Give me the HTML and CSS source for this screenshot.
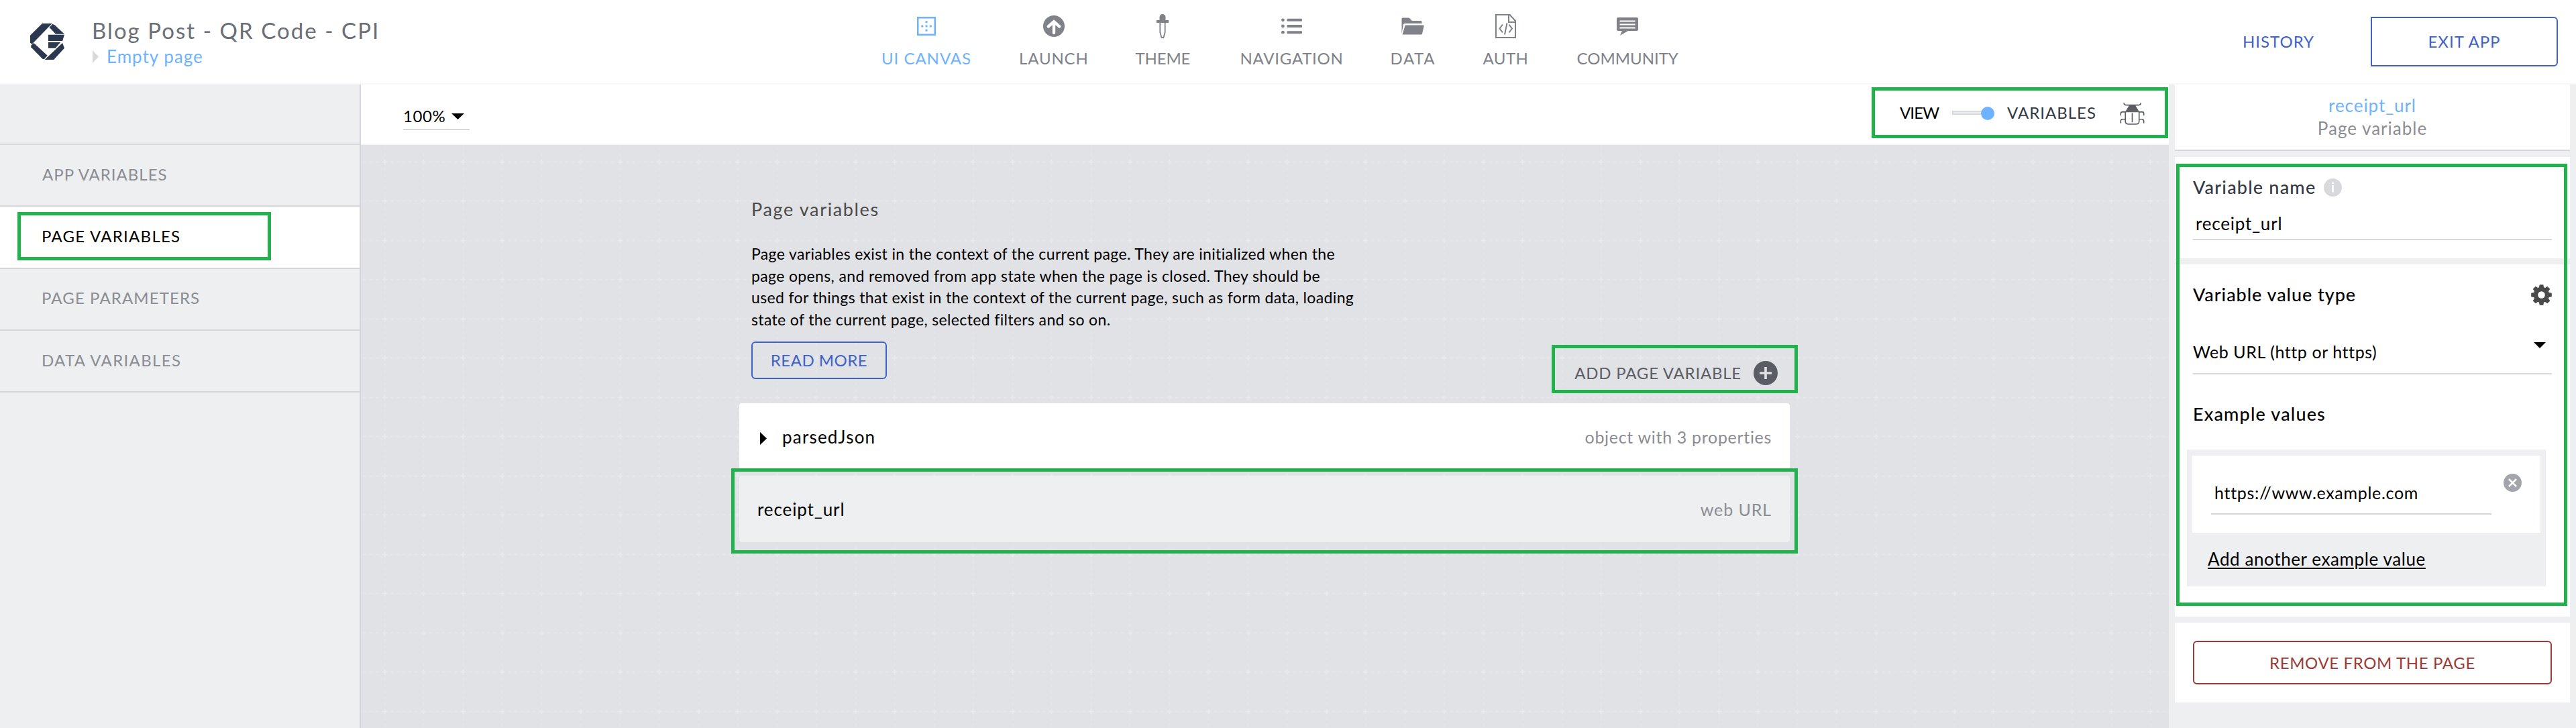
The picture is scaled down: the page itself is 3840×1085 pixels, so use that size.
FILE: index.html
```html
<!DOCTYPE html>
<html lang="en">
<head>
<meta charset="utf-8">
<title>Blog Post - QR Code - CPI</title>
<link rel="stylesheet" href="styles.css">
</head>
<body>
<header class="topbar">
  <svg class="logo" viewBox="110 105 125 162" preserveAspectRatio="none" fill="#2b3850">
    <path d="M154 105H190L116 198L110 190V158Z"/>
    <path d="M192 107L201 113L235 152H203L180 122Z"/>
    <path d="M176 155H235L228 183H176Z"/>
    <path d="M176 189H221L202 215H176Z"/>
    <path d="M228 192L235 215L196 267H163Z"/>
    <path d="M123 192L173 248L161 265L155 263L113 211V203Z"/>
  </svg>
  <div class="title">
    <h1>Blog Post - QR Code - CPI</h1>
    <div class="crumb"><svg width="9" height="19" viewBox="0 0 9 19"><path d="M0 0L9 9.5L0 19Z" fill="#d8d9dd"/></svg><a>Empty page</a></div>
  </div>
  <nav class="tabs">
    <a class="tab active t-canvas">
      <svg width="28" height="28" viewBox="0 0 28 28"><rect x="1.25" y="1.25" width="25.5" height="25.5" fill="none" stroke="#6eb3ff" stroke-width="2.5"/><path d="M12.5 6.300h3v3h-3zM12.500 12.500h3v3h-3zM12.500 18.700h3v3h-3zM6.300 12.500h3v3h-3zM18.700 12.500h3v3h-3z" fill="#6eb3ff"/></svg>
      <span>UI CANVAS</span></a>
    <a class="tab t-launch">
      <svg width="32" height="32" viewBox="0 0 32 32"><circle cx="16" cy="16" r="16" fill="#808289"/><path d="M16 26V10M7.800 16.500L16 9.200L24.200 16.500" fill="none" stroke="#fff" stroke-width="4.400" stroke-linecap="round" stroke-linejoin="miter"/></svg>
      <span>LAUNCH</span></a>
    <a class="tab t-theme">
      <svg width="18" height="36" viewBox="0 0 18 36"><path d="M4.500 9V4.500a4.500 4.500 0 0 1 9 0V9H18v4H0V9Z" fill="#808289"/><path d="M5.300 13V27L7.600 35H10.400L12.700 27V13" fill="none" stroke="#808289" stroke-width="1.800"/></svg>
      <span>THEME</span></a>
    <a class="tab t-navigation">
      <svg width="31" height="24" viewBox="0 0 31 24" fill="#808289"><circle cx="2.400" cy="2.800" r="2.400"/><circle cx="2.400" cy="12" r="2.400"/><circle cx="2.400" cy="21.200" r="2.400"/><rect x="8.500" y=".8" width="22.500" height="4" rx="1.200"/><rect x="8.500" y="10" width="22.500" height="4" rx="1.200"/><rect x="8.500" y="19.200" width="22.500" height="4" rx="1.200"/></svg>
      <span>NAVIGATION</span></a>
    <a class="tab t-data">
      <svg width="34" height="26" viewBox="0 0 34 26" fill="#808289"><path d="M.5 24V2Q.5.500 2 .5H10.500Q12 .5 13 2L16 5H29Q30.500 5 30.500 6.500V9H5Q3.500 9 3 10.500Z"/><path d="M5.700 11.500H32.500Q34 11.500 33.600 13L31 24.500Q30.700 25.500 29.500 25.500H1.500Z"/></svg>
      <span>DATA</span></a>
    <a class="tab t-auth">
      <svg width="31" height="36" viewBox="0 0 31 36" fill="none" stroke="#808289" stroke-width="2"><path d="M1 1H21.500L30 10V35H1ZM20 1V12H30"/><path d="M11 15.500L6.500 21.500L11 27.500M20.500 15.500L25 21.500L20.500 27.500M17.500 13.500L14 30.500"/></svg>
      <span>AUTH</span></a>
    <a class="tab t-community">
      <svg width="32" height="27" viewBox="0 0 32 27"><path d="M2 0H30Q32 0 32 2V18Q32 20 30 20H17L5 27L8 20H2Q0 20 0 18V2Q0 0 2 0Z" fill="#808289"/><path d="M4.500 5.500H27.500M4.500 10.500H27.500M4.500 15.500H27.500" stroke="#fff" stroke-width="2.200"/></svg>
      <span>COMMUNITY</span></a>
  </nav>
  <a class="history">HISTORY</a>
  <button class="exit">EXIT APP</button>
</header>

<div class="workspace">
  <aside class="sidebar">
    <div class="side-head"></div>
    <a class="side-item s-app">APP VARIABLES</a>
    <a class="side-item selected s-page">PAGE VARIABLES</a>
    <a class="side-item s-param">PAGE PARAMETERS</a>
    <a class="side-item s-data">DATA VARIABLES</a>
  </aside>

  <main class="main">
    <div class="toolbar">
      <div class="zoom-select"><span>100%</span><svg width="19" height="9" viewBox="0 0 19 9"><path d="M0 0H19L9.500 9Z"/></svg></div>
      <div class="mode">
        <span class="mode-view">VIEW</span>
        <span class="toggle"><i class="track"></i><i class="knob"></i></span>
        <span class="mode-vars">VARIABLES</span>
        <svg class="bug" width="37" height="33" viewBox="62 38 110 100" fill="none" stroke="#5b5d65" stroke-width="5">
          <path d="M79 39Q80 49 91 49H144Q155 49 156 39"/>
          <path d="M103 50H131L147 77H87Z" fill="#5b5d65" stroke="none"/>
          <path d="M86 79H148V122Q148 135 134 135H100Q86 135 86 122ZM117 84V127"/>
          <path d="M86 80H72Q65 80 65 87V96M148 80H162Q169 80 169 87V96M86 113H74Q65 113 65 121V131M148 113H160Q169 113 169 121V131"/>
        </svg>
      </div>
    </div>
    <div class="canvas">
      <section class="content">
        <div class="intro">
          <h2>Page variables</h2>
          <p>Page variables exist in the context of the current page. They are initialized when the<br>page opens, and removed from app state when the page is closed. They should be<br>used for things that exist in the context of the current page, such as form data, loading<br>state of the current page, selected filters and so on.</p>
          <div class="actions">
            <button class="read-more">READ MORE</button>
            <a class="add"><span>ADD PAGE VARIABLE</span><svg width="36" height="36" viewBox="0 0 36 36"><circle cx="18" cy="18" r="18" fill="#5b5d65"/><path d="M18 9V27M9 18H27" stroke="#e1e2e6" stroke-width="3.600"/></svg></a>
          </div>
        </div>
        <div class="row">
          <svg width="10" height="19" viewBox="0 0 10 19"><path d="M0 0L10 9.500L0 19Z"/></svg>
          <span class="name parsed">parsedJson</span><span class="kind object">object with 3 properties</span>
        </div>
        <div class="row current">
          <span class="name">receipt_url</span><span class="kind weburl">web URL</span>
        </div>
      </section>
    </div>
  </main>

  <aside class="panel">
    <div class="card head">
      <div class="head-name">receipt_url</div>
      <div class="head-kind">Page variable</div>
    </div>
    <div class="card name-card">
      <div class="label name-label"><span>Variable name</span><svg width="27" height="27" viewBox="0 0 27 27"><circle cx="13.500" cy="13.500" r="13.500" fill="#d8d9dd"/><path d="M12.200 5.500h2.600v2.600h-2.600zM12.200 10h2.600v10.500h-2.600z" fill="#fff"/></svg></div>
      <div class="input">receipt_url</div>
    </div>
    <div class="card type-card">
      <div class="label type-label"><span>Variable value type</span>
        <svg width="31" height="31" viewBox="-15.500 -15.500 31 31" fill="#4a4a4a"><path id="tooth" d="M-2.800 -15.300H2.800L4 -9H-4Z"/><use href="#tooth" transform="rotate(45)"/><use href="#tooth" transform="rotate(90)"/><use href="#tooth" transform="rotate(135)"/><use href="#tooth" transform="rotate(180)"/><use href="#tooth" transform="rotate(225)"/><use href="#tooth" transform="rotate(270)"/><use href="#tooth" transform="rotate(315)"/><circle r="8.500" fill="none" stroke="#4a4a4a" stroke-width="6.400"/></svg>
      </div>
      <div class="select"><span>Web URL (http or https)</span><svg width="18" height="9" viewBox="0 0 18 9"><path d="M0 0H18L9 9Z"/></svg></div>
      <div class="label example-label">Example values</div>
      <div class="examples">
        <div class="example">
          <div class="example-value">https://www.example.com</div>
          <svg width="27" height="27" viewBox="0 0 27 27"><circle cx="13.500" cy="13.500" r="13.500" fill="#a3a5aa"/><path d="M8 8L19 19M19 8L8 19" stroke="#fff" stroke-width="2.600"/></svg>
        </div>
        <a class="add-example">Add another example value</a>
      </div>
    </div>
    <div class="card remove-card"><button class="remove">REMOVE FROM THE PAGE</button></div>
  </aside>
</div>

<i class="mark mark-side"></i>
<i class="mark mark-mode"></i>
<i class="mark mark-add"></i>
<i class="mark mark-row"></i>
<i class="mark mark-panel"></i>
</body>
</html>
```
FILE: styles.css
```css
* { box-sizing: border-box; }
body {
  margin: 0;
  position: relative;
  height: 1085px;
  overflow: hidden;
  font: 24px/30px Lato, "Liberation Sans", sans-serif;
  color: #000;
  background: #fff;
  white-space: nowrap;
}
h1, h2, p { margin: 0; font-weight: 400; }
svg { display: block; flex: none; }
button { font: inherit; background: none; padding: 0; margin: 0; }

/* Top bar */
.topbar {
  height: 126px;
  border-bottom: 2px solid #f6f7f8;
  display: flex;
  align-items: flex-start;
}
.logo { width: 51px; height: 54px; margin: 35px 0 0 45px; }
.title { margin: 25px 0 0 41px; width: 1177px; }
h1 { font-size: 33px; line-height: 40px; letter-spacing: 2.05px; color: #6b6e76; }
.crumb {
  display: flex;
  align-items: center;
  gap: 12px;
  margin-top: 4px;
  padding-left: 1px;
  font-size: 26px;
  letter-spacing: 1px;
  color: #6eb3ff;
}
.tabs { display: flex; color: #808289; }
.tab {
  display: grid;
  grid-template-rows: 40px 30px;
  row-gap: 13px;
  padding-top: 19px;
  margin-right: 74px;
  place-items: center;
}
.tab.active { color: #6eb3ff; }
.t-canvas { width: 131px; letter-spacing: .96px; }
.t-launch { width: 99.500px; letter-spacing: .86px; }
.t-theme { width: 81px; letter-spacing: -.16px; margin-right: 75px; }
.t-navigation { width: 150px; letter-spacing: .75px; }
.t-data { width: 65px; letter-spacing: 1.6px; margin-right: 73px; }
.t-auth { width: 66px; letter-spacing: .44px; }
.t-community { width: 151px; margin-right: 0; }
.history { margin: 47px 0 0 auto; color: #3f62c9; letter-spacing: 1px; }
.exit {
  width: 279px;
  height: 74px;
  margin: 25px 27px 0 84px;
  border: 2px solid #3f62c9;
  border-radius: 0 6px 6px 0;
  color: #3f62c9;
  letter-spacing: 1px;
}

.workspace { display: grid; grid-template-columns: 538px 2695px 607px; height: 959px; }

/* Left sidebar */
.sidebar { background: #edeff1; border-right: 2px solid #d6d6dc; }
.side-head { height: 90px; border-bottom: 2px solid #d6d6dc; }
.side-item {
  display: block;
  height: 92px;
  padding: 29px 0 0 62px;
  border-bottom: 2px solid #d6d6dc;
  color: #8b8d93;
}
.side-item.selected { height: 93px; background: #fff; color: #000; }
.s-app { letter-spacing: .99px; padding-left: 63px; }
.s-page { letter-spacing: 1.27px; }
.s-param { letter-spacing: 1.11px; padding-top: 28px; }
.s-data { letter-spacing: 1.34px; }

/* Toolbar */
.toolbar {
  height: 90px;
  border-bottom: 2px solid #f6f7f8;
  padding: 32px 36px 0 63px;
  display: flex;
  justify-content: space-between;
  align-items: flex-start;
}
.zoom-select {
  display: flex;
  width: 99px;
  height: 36px;
  border-bottom: 2px solid #d6d6dc;
}
.zoom-select span { width: 72px; letter-spacing: .6px; }
.zoom-select svg { margin-top: 11px; }
.mode { display: flex; height: 30px; }
.mode-view { width: 78px; letter-spacing: -.9px; margin-top: -5px; }
.toggle { position: relative; width: 63px; margin-right: 19px; }
.track {
  display: block;
  width: 50px;
  height: 6px;
  margin-top: 7px;
  border: 2px solid #d8d9dd;
  background: #eeeff1;
}
.knob {
  position: absolute;
  right: 0;
  top: 1px;
  width: 20px;
  height: 20px;
  border-radius: 50%;
  background: #6eb3ff;
}
.mode-vars { width: 168px; letter-spacing: 1px; color: #333845; margin-top: -5px; }
.bug { margin-top: -5px; }

/* Canvas */
.canvas {
  height: 869px;
  padding: 81px 0 0 564px;
  background: #e1e2e6 url("data:image/svg+xml,%3Csvg xmlns='http://www.w3.org/2000/svg' width='58.5' height='58.5' viewBox='0 0 58.5 58.5'%3E%3Cg fill='%23e8e9ec'%3E%3Cpath d='M25.500 28.300h7.500v2h-7.500zM28.300 25.500h2v7.500h-2z'/%3E%3Cpath d='M37.800 28.300h4.500v2h-4.500zM47 28.300h4.500v2h-4.500zM56.200 28.300h2.300v2h-2.300zM0 28.300h2.300v2h-2.300zM7 28.300h4.500v2h-4.500zM16.200 28.300h4.500v2h-4.500z' opacity='.7'/%3E%3Cpath d='M28.300 37.800v4.500h2v-4.500zM28.300 47v4.500h2v-4.500zM28.300 56.200v2.300h2v-2.300zM28.300 0v2.300h2v-2.300zM28.300 7v4.500h2v-4.500zM28.300 16.200v4.500h2v-4.500z' opacity='.35'/%3E%3C/g%3E%3C/svg%3E") 6px -4px / 58.5px 58.5px;
}
.content { width: 1566px; }
.intro { padding-left: 18px; height: 304px; }
h2 { font-size: 27px; letter-spacing: 1.65px; color: #4a4a4a; }
.intro p {
  margin-top: 35px;
  font-size: 23px;
  line-height: 32.5px;
  letter-spacing: .36px;
}
.actions { display: flex; justify-content: space-between; align-items: flex-start; margin-top: 17px; }
.read-more {
  width: 202px;
  height: 56px;
  border: 2px solid #3f62c9;
  border-radius: 6px;
  color: #3f62c9;
  letter-spacing: .5px;
}
.add {
  display: flex;
  align-items: center;
  gap: 18px;
  margin: 29px 18px 0 0;
  color: #5b5d65;
  letter-spacing: .78px;
}
.row {
  display: flex;
  align-items: center;
  height: 99px;
  padding: 0 27px 0 31px;
  margin-bottom: 9px;
  border-radius: 4px;
  background: #fff;
}
.row.current { background: #edeff1; padding-left: 27px; }
.row .name { font-size: 26px; letter-spacing: .9px; margin-top: 1px; }
.row .parsed { letter-spacing: 1.2px; padding-left: 23px; }
.row svg { margin-top: 6px; }
.kind { margin: 1px 0 0 auto; font-size: 25px; color: #8b8d93; }
.object { letter-spacing: .68px; }
.weburl { letter-spacing: .9px; }

/* Properties panel */
.panel { background: #edeff1; padding: 0 9px; }
.card { background: #fff; margin-bottom: 9px; }
.head { height: 99px; border-bottom: 2px solid #d6d6dc; padding-top: 16px; text-align: center; }
.head-name { font-size: 26px; letter-spacing: .93px; color: #6eb3ff; }
.head-kind { font-size: 26px; letter-spacing: 1px; color: #8b8d93; margin-top: 4px; }
.label { font-size: 27px; font-weight: 500; display: flex; }
.name-card { height: 151px; padding: 30px 27px 0; }
.name-label { color: #333845; letter-spacing: 1.2px; }
.name-label svg { margin: 2px 0 0 12px; }
.input {
  height: 39px;
  margin-top: 25px;
  padding-left: 4px;
  border-bottom: 2px solid #d6d6dc;
  font-size: 26px;
  line-height: 28px;
  letter-spacing: .8px;
}
.type-card { height: 525px; padding: 30px 27px 0; }
.type-label { height: 31px; justify-content: space-between; letter-spacing: .95px; }
.select {
  height: 49px;
  margin-top: 54px;
  display: flex;
  justify-content: space-between;
  border-bottom: 2px solid #d6d6dc;
  font-size: 25px;
  letter-spacing: .57px;
}
.select svg { margin: 1px 9px 0 0; }
.example-label { margin-top: 44px; letter-spacing: 1.15px; }
.examples {
  width: 535px;
  height: 204px;
  margin: 38px 0 0 -9px;
  padding: 9px 8px 0;
  background: #edeff1;
}
.example { display: flex; height: 115px; padding-left: 28px; background: #fff; }
.example-value {
  width: 418px;
  height: 48px;
  margin: 40px 18px 0 0;
  padding-left: 5px;
  border-bottom: 2px solid #d6d6dc;
  font-size: 25px;
  letter-spacing: .7px;
}
.example svg { margin-top: 27px; }
.add-example {
  display: block;
  margin: 24px 0 0 23px;
  font-size: 26px;
  letter-spacing: .6px;
  text-decoration: underline;
  text-decoration-thickness: 2px;
  text-underline-offset: 3px;
}
.remove-card { height: 119px; padding: 27px 27px 0; }
.remove {
  width: 535px;
  height: 65px;
  border: 2px solid #9c3b36;
  border-radius: 6px;
  color: #9c3b36;
  letter-spacing: .62px;
}

/* Callout frames drawn over the interface */
.mark { position: absolute; border: 5px solid #22b14c; }
.mark-side { left: 26px; top: 316px; width: 378px; height: 72px; }
.mark-mode { left: 2790px; top: 130px; width: 442px; height: 76px; }
.mark-add { left: 2313px; top: 514px; width: 367px; height: 72px; }
.mark-row { left: 1090px; top: 698px; width: 1590px; height: 127px; }
.mark-panel { left: 3244px; top: 244px; width: 583px; height: 659px; }
```
